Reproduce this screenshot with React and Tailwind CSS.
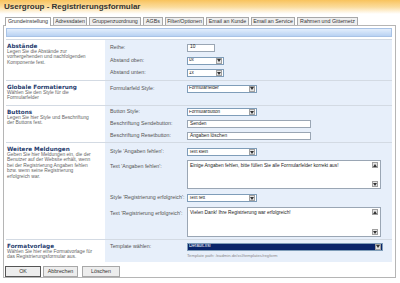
import React from "react";

const Arrow = ({ up }) => (
  <svg width="4" height="3" viewBox="0 0 4 3">
    <path d={up ? "M0 3 L2 0 L4 3 Z" : "M0 0 L4 0 L2 3 Z"} fill="#333" />
  </svg>
);

const ArrowBox = ({ up }) => (
  <span className="flex items-center justify-center w-[6px] h-[6px] bg-[#e4e4e4] border border-[#a0a0a0] shrink-0">
    <Arrow up={up} />
  </span>
);

const Select = ({ w, value, dark }) => (
  <div
    className={`flex items-center h-[8px] border border-[#7f9db9] pl-[1px] pr-[1px] ${w} ${
      dark ? "bg-[#0a246a] text-white" : "bg-white text-[#222]"
    }`}
  >
    <span className="flex-1 text-[4.6px] leading-none truncate">{value}</span>
    <ArrowBox />
  </div>
);

const Input = ({ w, value }) => (
  <div className={`flex items-center h-[8px] border border-[#9aa6b4] bg-white px-[2px] ${w}`}>
    <span className="text-[4.8px] leading-none text-[#222]">{value}</span>
  </div>
);

const TextArea = ({ h, value }) => (
  <div className={`flex w-[194px] border border-[#9aa6b4] bg-white ${h}`}>
    <span className="flex-1 px-[2px] pt-[2px] text-[4.8px] leading-tight text-[#222]">{value}</span>
    <div className="flex flex-col justify-between w-[8px] pr-[1px] py-[1px]">
      <ArrowBox up />
      <ArrowBox />
    </div>
  </div>
);

const Label = ({ children, top }) => (
  <div
    className={`w-[82px] shrink-0 pl-[5px] whitespace-nowrap text-[5.3px] leading-none text-[#555] ${
      top ? "pt-[4px] self-start" : ""
    }`}
  >
    {children}
  </div>
);

const Row = ({ h, label, children, top }) => (
  <div className={`flex ${top ? "items-start" : "items-center"} ${h}`}>
    <Label top={top}>{label}</Label>
    {children}
  </div>
);

const Section = ({ title, desc, h, pt, children, last }) => (
  <div className={`flex ${h} ${last ? "" : "border-b border-[#d3dae3]"}`}>
    <div className="w-[99px] shrink-0 bg-white pl-[1px] pt-[3px] pr-[12px]">
      <div className="font-['DejaVu_Sans',Verdana,sans-serif] font-bold text-[5.7px] leading-[6px] text-[#1f3c6e]">
        {title}
      </div>
      <div className="text-[4.9px] leading-[5.4px] text-[#666]">{desc}</div>
    </div>
    <div className={`flex-1 flex flex-col bg-[#e7effa] ${pt}`}>{children}</div>
  </div>
);

const tabs = [
  ["Grundeinstellung", "w-[46px]"],
  ["Adressdaten", "w-[34px]"],
  ["Gruppenzuordnung", "w-[52px]"],
  ["AGBs", "w-[20px]"],
  ["Filter/Optionen", "w-[39px]"],
  ["Email an Kunde", "w-[43px]"],
  ["Email an Service", "w-[44px]"],
  ["Rahmen und Gitternetz", "w-[61px]"],
];

export default function App() {
  return (
    <div className="w-[400px] h-[283px] bg-white overflow-hidden font-['Liberation_Sans',Arial,sans-serif]">
      {/* title */}
      <div className="h-[14px] bg-gradient-to-b from-[#f8c35c] via-[#fbdc9c] to-white pl-[4px] pt-[3px]">
        <div className="text-[8px] leading-none font-bold text-[#333]">Usergroup - Registrierungsformular</div>
      </div>

      {/* tabs */}
      <div className="flex items-end gap-[2px] pl-[5px] mt-[3px] h-[8px] relative z-10">
        {tabs.map(([t, w], i) => (
          <div
            key={t}
            className={`${w} h-[8px] border border-b-0 border-[#a8a8a8] flex items-center justify-center text-[5.3px] leading-none text-[#333] ${
              i === 0 ? "bg-white h-[9px] -mb-px" : "bg-[#efefef]"
            }`}
          >
            {t}
          </div>
        ))}
      </div>

      {/* panel */}
      <div className="ml-[3px] w-[393px] h-[253px] border border-[#b5b5b5] bg-white pl-[2px] pr-[3px] pt-[2px] flex flex-col">
        <div className="h-[9px] border border-[#a9c3e6] bg-gradient-to-b from-[#e3eefc] to-[#b9d2f2]" />

        <div className="mt-[2px] flex flex-col border-t border-[#d3dae3]">
          <Section
            title="Abstände"
            desc="Legen Sie die Abstände zur vorhergehenden und nachfolgenden Komponente fest."
            h="h-[41px]"
            pt="pt-[1px]"
          >
            <Row h="h-[13px]" label="Reihe:">
              <Input w="w-[28px]" value="10" />
            </Row>
            <Row h="h-[13px]" label="Abstand oben:">
              <Select w="w-[37px]" value="0x" />
            </Row>
            <Row h="h-[12px]" label="Abstand unten:">
              <Select w="w-[37px]" value="1x" />
            </Row>
          </Section>

          <Section
            title="Globale Formatierung"
            desc="Wählen Sie den Style für die Formularfelder"
            h="h-[25px]"
            pt="pt-[1px]"
          >
            <Row h="h-[13px]" label="Formularfeld Style:">
              <Select w="w-[70px]" value="Formularfelder" />
            </Row>
          </Section>

          <Section
            title="Buttons"
            desc="Legen Sie hier Style und Beschriftung der Buttons fest."
            h="h-[37px]"
            pt="pt-0"
          >
            <Row h="h-[13px]" label="Button Style:">
              <Select w="w-[70px]" value="Formularbutton" />
            </Row>
            <Row h="h-[13px]" label="Beschriftung Sendebutton:">
              <Input w="w-[124px]" value="Senden" />
            </Row>
            <Row h="h-[13px]" label="Beschriftung Resetbutton:">
              <Input w="w-[124px]" value="Angaben löschen" />
            </Row>
          </Section>

          <Section
            title="Weitere Meldungen"
            desc="Geben Sie hier Meldungen ein, die der Benutzer auf der Website erhält, wenn bei der Registrierung Angaben fehlen bzw. wenn seine Registrierung erfolgreich war."
            h="h-[97px]"
            pt="pt-[3px]"
          >
            <Row h="h-[12px]" label="Style 'Angaben fehlen':">
              <Select w="w-[70px]" value="Text klein" />
            </Row>
            <div className="mt-[2px]">
              <Row h="h-[29px]" label="Text 'Angaben fehlen':" top>
                <TextArea h="h-[29px]" value="Einige Angaben fehlen, bitte füllen Sie alle Formularfelder korrekt aus!" />
              </Row>
            </div>
            <div className="mt-[3px]">
              <Row h="h-[12px]" label="Style 'Registrierung erfolgreich':">
                <Select w="w-[70px]" value="Text fett" />
              </Row>
            </div>
            <div className="mt-[3px]">
              <Row h="h-[30px]" label="Text 'Registrierung erfolgreich':" top>
                <TextArea h="h-[30px]" value="Vielen Dank! Ihre Registrierung war erfolgreich!" />
              </Row>
            </div>
          </Section>

          <Section
            title="Formatvorlage"
            desc="Wählen Sie hier eine Formatvorlage für das Registrierungsformular aus."
            h="h-[22px]"
            pt="pt-[2px]"
            last
          >
            <Row h="h-[9px]" label="Template wählen:">
              <Select w="w-[196px]" value="Default.xsl" dark />
            </Row>
            <div className="pl-[82px] pt-[3px] text-[4.2px] leading-none text-[#8a8a8a]">
              Template path: /eadmin.de/xsl/templates/regform
            </div>
          </Section>
        </div>

        <div className="flex items-center gap-[2px] mt-[4px] -ml-[1px]">
          <div className="w-[36px] h-[11px] border border-[#555] bg-[#ededed] flex items-center justify-center text-[5.3px] text-[#333]">
            OK
          </div>
          <div className="w-[35px] h-[11px] border border-[#a8a8a8] bg-[#ededed] flex items-center justify-center text-[5.3px] text-[#333]">
            Abbrechen
          </div>
          <div className="ml-[2px] w-[38px] h-[11px] border border-[#a8a8a8] bg-[#ededed] flex items-center justify-center text-[5.3px] text-[#333]">
            Löschen
          </div>
        </div>
      </div>
    </div>
  );
}
